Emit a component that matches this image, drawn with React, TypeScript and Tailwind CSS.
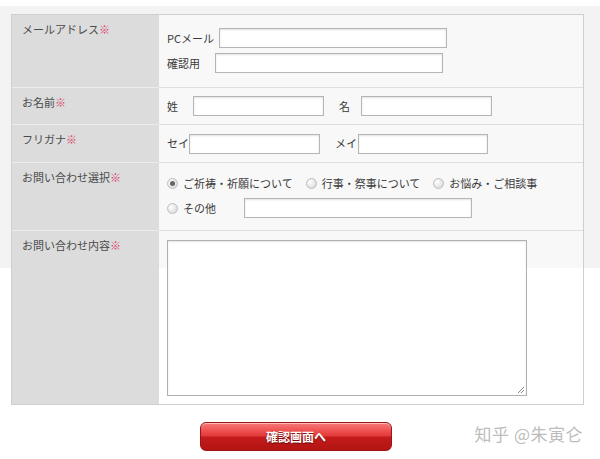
import React from 'react'

const FONT = { fontFamily: '"Noto Sans CJK JP", "Noto Sans", sans-serif' }

function Req() {
  return <span className="text-[#d9436a]">※</span>
}

function Field({ w }: { w: number }) {
  return (
    <div
      className="h-[20px] bg-white border border-[#b5b5b5] shadow-[inset_0_1px_2px_rgba(0,0,0,0.12)]"
      style={{ width: w }}
    />
  )
}

function Radio({ checked, label }: { checked?: boolean; label: string }) {
  return (
    <div className="flex items-center gap-[5px]">
      <span className="w-[11px] h-[11px] rounded-full border border-[#bdbdbd] bg-[radial-gradient(circle_at_35%_35%,#ffffff,#d2d2d2)] flex items-center justify-center">
        {checked && <span className="w-[5px] h-[5px] rounded-full bg-[#666]" />}
      </span>
      <span>{label}</span>
    </div>
  )
}

function Row({
  label,
  h,
  first,
  children,
  contentClass,
}: {
  label: string
  h: number
  first?: boolean
  children: React.ReactNode
  contentClass?: string
}) {
  return (
    <div className="flex" style={{ height: h }}>
      <div
        className={
          'w-[147px] shrink-0 bg-[#dcdcdc] pl-[10px] pt-[9px] text-[#4a4a4a] ' +
          (first ? '' : 'border-t border-[#ececec]')
        }
      >
        {label}
        <Req />
      </div>
      <div
        className={
          'flex-1 bg-white/40 pl-[8px] text-[#3a3a3a] ' +
          (first ? '' : 'border-t border-[#dedede] ') +
          (contentClass ?? '')
        }
      >
        {children}
      </div>
    </div>
  )
}

export default function App() {
  return (
    <div
      className="w-[600px] h-[459px] overflow-hidden text-[11px] leading-none bg-[linear-gradient(to_bottom,#ffffff_6px,#f3f3f3_6px,#f3f3f3_268px,#ffffff_268px)]"
      style={FONT}
    >
      <div className="pt-[14px] pl-[11px]">
        <div className="w-[573px] border border-[#cfcfcf]">
          <Row label="メールアドレス" h={72} first contentClass="flex flex-col gap-[5px] pt-[13px]">
            <div className="flex items-center">
              <span className="w-[52px]">PCメール</span>
              <Field w={228} />
            </div>
            <div className="flex items-center">
              <span className="w-[48px]">確認用</span>
              <Field w={228} />
            </div>
          </Row>
          <Row label="お名前" h={37} contentClass="flex items-center">
            <span className="w-[26px]">姓</span>
            <Field w={131} />
            <span className="ml-[15px] w-[22px]">名</span>
            <Field w={131} />
          </Row>
          <Row label="フリガナ" h={38} contentClass="flex items-center">
            <span className="w-[22px]">セイ</span>
            <Field w={131} />
            <span className="ml-[15px] w-[23px]">メイ</span>
            <Field w={130} />
          </Row>
          <Row label="お問い合わせ選択" h={68} contentClass="flex flex-col pt-[15px] gap-[13px]">
            <div className="flex items-center gap-[13px]">
              <Radio checked label="ご祈祷・祈願について" />
              <Radio label="行事・祭事について" />
              <Radio label="お悩み・ご相談事" />
            </div>
            <div className="flex items-center -mt-[4px]">
              <div className="w-[77px]">
                <Radio label="その他" />
              </div>
              <Field w={228} />
            </div>
          </Row>
          <Row label="お問い合わせ内容" h={174} contentClass="pt-[9px]">
            <div className="relative w-[360px] h-[156px] bg-white border border-[#b0b0b0] shadow-[inset_0_1px_2px_rgba(0,0,0,0.1)]">
              <svg className="absolute right-[1px] bottom-[1px]" width="8" height="8" viewBox="0 0 8 8">
                <path d="M7 1L1 7M7 4L4 7" stroke="#888" strokeWidth="1" />
              </svg>
            </div>
          </Row>
        </div>
      </div>
      <div className="relative flex justify-center pt-[17px] pr-[8px]">
        <button className="w-[192px] h-[29px] rounded-[6px] border border-[#9c1414] bg-[linear-gradient(to_bottom,#f77a7a_0%,#ee4f4f_30%,#e23a3a_48%,#c41b1b_52%,#b31414_100%)] shadow-[inset_0_1px_0_rgba(255,255,255,0.5)] text-white font-bold text-[12px] [text-shadow:0_1px_1px_rgba(80,0,0,0.8)]">
          確認画面へ
        </button>
        <span className="absolute right-[17px] top-[20px] text-[17px] text-[#bdbdbd] tracking-[0.5px]">
          知乎 @朱寅仑
        </span>
      </div>
    </div>
  )
}
